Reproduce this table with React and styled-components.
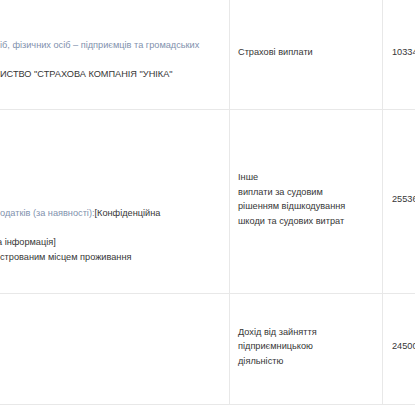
import React from 'react'
import styled, { createGlobalStyle } from 'styled-components'

const GlobalStyle = createGlobalStyle`
    html, body {
        margin: 0;
        padding: 0;
        background: #ffffff;
    }
    body {
        font-family: "Liberation Sans", Arial, sans-serif;
        overflow: hidden;
    }
`

const rows = [
    {
        height: 109,
        owner: [
            null,
            { text: 'іб, фізичних осіб – підприємців та громадських', muted: true },
            null,
            { text: 'ИСТВО "СТРАХОВА КОМПАНІЯ "УНІКА"' },
        ],
        type: ['Страхові виплати'],
        amount: '10334.00',
    },
    {
        height: 183,
        owner: [
            null,
            null,
            null,
            null,
            null,
            { parts: [{ text: 'одатків (за наявності):', muted: true }, { text: '[Конфіденційна' }] },
            null,
            { text: 'а інформація]', shift: 3 },
            { text: 'строваним місцем проживання' },
        ],
        type: ['Інше', 'виплати за судовим', 'рішенням відшкодування', 'шкоди та судових витрат'],
        amount: '25536.00',
    },
    {
        height: 110,
        owner: [],
        type: ['Дохід від зайняття', 'підприємницькою', 'діяльністю'],
        amount: '24500.00',
    },
]

export default function App() {
    return (
        <>
            <GlobalStyle />
            <Viewport>
                <Table>
                    {rows.map((row, i) => (
                        <Row key={i} $height={row.height}>
                            <OwnerCell>
                                {row.owner.map((line, j) => {
                                    if (!line) return <Line key={j} />
                                    if (line.parts) {
                                        return (
                                            <Line key={j}>
                                                {line.parts.map((p, k) => (
                                                    <Text key={k} $muted={p.muted}>{p.text}</Text>
                                                ))}
                                            </Line>
                                        )
                                    }
                                    return (
                                        <Line key={j} $shift={line.shift}>
                                            <Text $muted={line.muted}>{line.text}</Text>
                                        </Line>
                                    )
                                })}
                            </OwnerCell>
                            <TypeCell>
                                {row.type.map((line, j) => (
                                    <Line key={j}>{line}</Line>
                                ))}
                            </TypeCell>
                            <AmountCell>{row.amount}</AmountCell>
                        </Row>
                    ))}
                </Table>
            </Viewport>
        </>
    )
}

const Viewport = styled.div`
    width: 415px;
    height: 415px;
    overflow: hidden;
    background: #ffffff;
`

const Table = styled.div`
    display: flex;
    flex-direction: column;
    width: 600px;
    font-size: 9.2px;
    line-height: 14.5px;
    color: #363636;
`

const Row = styled.div`
    display: grid;
    grid-template-columns: 230px 153px 1fr;
    height: ${({ $height }) => $height}px;
    border-bottom: 1px solid #e8e8e8;
`

const Cell = styled.div`
    display: flex;
    flex-direction: column;
    justify-content: center;
    padding-bottom: 5px;
    border-right: 1px solid #e8e8e8;
    overflow: hidden;
`

const OwnerCell = styled(Cell)`
    padding-left: 0;
`

const TypeCell = styled(Cell)`
    padding-left: 8px;
    padding-right: 8px;
`

const AmountCell = styled(Cell)`
    padding-left: 9px;
    border-right: none;
    white-space: nowrap;
`

const Line = styled.div`
    height: 14.5px;
    white-space: nowrap;
    margin-left: ${({ $shift }) => ($shift ? -$shift : 0)}px;
`

const Text = styled.span`
    color: ${({ $muted }) => ($muted ? '#8191ad' : '#363636')};
`
